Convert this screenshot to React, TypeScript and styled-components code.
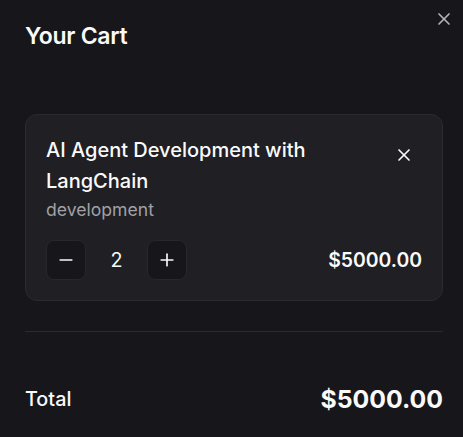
import React from "react";
import styled, { createGlobalStyle } from "styled-components";

const Global = createGlobalStyle`
  html, body { margin: 0; padding: 0; background: #17171b; }
  body { font-family: Inter, "Noto Sans", sans-serif; color: #fafafa; -webkit-font-smoothing: antialiased; }
  * { box-sizing: border-box; }
`;

const Sheet = styled.div`
  position: relative;
  width: 463px;
  height: 437px;
  background: #17171b;
  padding: 20px 20px 0 25px;
  display: flex;
  flex-direction: column;
  overflow: hidden;
`;

const CloseButton = styled.button`
  position: absolute;
  top: 9px;
  right: 9px;
  width: 20px;
  height: 20px;
  padding: 0;
  border: none;
  background: transparent;
  color: #b4b4b8;
  display: flex;
  align-items: center;
  justify-content: center;
  cursor: pointer;
`;

const Title = styled.h2`
  margin: 0;
  font-size: 23px;
  line-height: 32px;
  font-weight: 600;
  letter-spacing: -0.3px;
  color: #fafafa;
`;

const Card = styled.div`
  margin-top: 62px;
  border: 1px solid #2a2a2f;
  border-radius: 12px;
  background: #1f1f24;
  padding: 20px;
  display: flex;
  flex-direction: column;
`;

const CardTop = styled.div`
  display: flex;
  justify-content: space-between;
  align-items: flex-start;
  gap: 12px;
`;

const ItemInfo = styled.div`
  flex: 1;
  min-width: 0;
`;

const ItemName = styled.div`
  font-size: 20px;
  line-height: 30.8px;
  font-weight: 500;
  color: #fafafa;
`;

const Category = styled.div`
  font-size: 17.6px;
  line-height: 26.4px;
  color: #a1a1a6;
`;

const RemoveButton = styled.button`
  width: 36px;
  height: 36px;
  margin-top: 2px;
  padding: 0;
  border: none;
  background: transparent;
  color: #fafafa;
  display: flex;
  align-items: center;
  justify-content: center;
  flex-shrink: 0;
`;

const CardBottom = styled.div`
  margin-top: 17px;
  display: flex;
  justify-content: space-between;
  align-items: center;
`;

const Qty = styled.div`
  display: flex;
  align-items: center;
  gap: 12px;
`;

const QtyButton = styled.button`
  width: 40px;
  height: 40px;
  border: 1px solid #27272c;
  border-radius: 8px;
  background: #17171b;
  color: #fafafa;
  display: flex;
  align-items: center;
  justify-content: center;
  padding: 0;
`;

const QtyValue = styled.span`
  width: 37px;
  text-align: center;
  font-size: 19.8px;
  font-weight: 400;
`;

const Price = styled.span`
  font-size: 19.4px;
  font-weight: 600;
`;

const Divider = styled.div`
  height: 1px;
  background: #2a2a2f;
  margin-top: 30px;
`;

const TotalRow = styled.div`
  margin-top: 52px;
  display: flex;
  justify-content: space-between;
  align-items: center;
`;

const TotalLabel = styled.span`
  font-size: 19.8px;
  font-weight: 500;
`;

const TotalValue = styled.span`
  font-size: 24.8px;
  font-weight: 700;
`;

const XIcon = ({ size = 20 }: { size?: number }) => (
  <svg width={size} height={size} viewBox="0 0 24 24" fill="none" stroke="currentColor" strokeWidth={2} strokeLinecap="round" strokeLinejoin="round">
    <path d="M18 6 6 18" />
    <path d="m6 6 12 12" />
  </svg>
);

const Minus = () => (
  <svg width={20} height={20} viewBox="0 0 24 24" fill="none" stroke="currentColor" strokeWidth={2} strokeLinecap="round">
    <path d="M5 12h14" />
  </svg>
);

const Plus = () => (
  <svg width={20} height={20} viewBox="0 0 24 24" fill="none" stroke="currentColor" strokeWidth={2} strokeLinecap="round">
    <path d="M5 12h14" />
    <path d="M12 5v14" />
  </svg>
);

export default function App() {
  return (
    <>
      <Global />
      <Sheet>
        <CloseButton aria-label="Close"><XIcon /></CloseButton>
        <Title>Your Cart</Title>
        <Card>
          <CardTop>
            <ItemInfo>
              <ItemName>AI Agent Development with LangChain</ItemName>
              <Category>development</Category>
            </ItemInfo>
            <RemoveButton aria-label="Remove"><XIcon /></RemoveButton>
          </CardTop>
          <CardBottom>
            <Qty>
              <QtyButton aria-label="Decrease"><Minus /></QtyButton>
              <QtyValue>2</QtyValue>
              <QtyButton aria-label="Increase"><Plus /></QtyButton>
            </Qty>
            <Price>$5000.00</Price>
          </CardBottom>
        </Card>
        <Divider />
        <TotalRow>
          <TotalLabel>Total</TotalLabel>
          <TotalValue>$5000.00</TotalValue>
        </TotalRow>
      </Sheet>
    </>
  );
}
